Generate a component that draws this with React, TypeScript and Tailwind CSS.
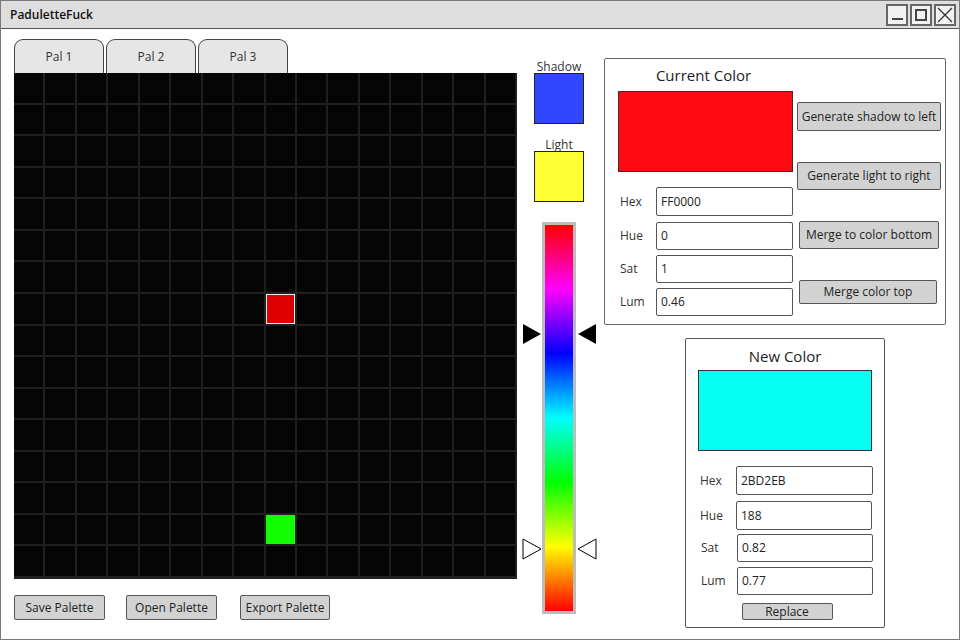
import React from 'react';

const font = { fontFamily: '"Open Sans", "DejaVu Sans", sans-serif' };

const CELLS = Array.from({ length: 256 }, (_, i) => i);
const RED_CELL = 7 * 16 + 8;
const GREEN_CELL = 14 * 16 + 8;

const Btn: React.FC<{ label: string; className?: string }> = ({ label, className }) => (
  <div
    className={
      'flex items-center justify-center bg-[#d2d2d2] border border-[#555] rounded-[2px] text-[12px] text-[#222] ' +
      (className || '')
    }
  >
    {label}
  </div>
);

const Field: React.FC<{ label: string; value: string; className?: string }> = ({ label, value, className }) => (
  <div className={'flex items-center ' + (className || '')}>
    <span className="w-[38px] pl-[2px] text-[12px] text-[#333]">{label}</span>
    <div className="flex-1 h-full flex items-center px-[4px] bg-white border-[1.5px] border-[#555] rounded-[2px] text-[12px] text-[#222]">
      {value}
    </div>
  </div>
);

const Arrow: React.FC<{ dir: 'right' | 'left'; filled: boolean }> = ({ dir, filled }) => (
  <svg width="20" height="22" viewBox="0 0 20 22">
    <polygon
      points={dir === 'right' ? '1,1 19,11 1,21' : '19,1 1,11 19,21'}
      fill={filled ? '#000' : '#fff'}
      stroke="#000"
      strokeWidth={filled ? 0 : 1}
    />
  </svg>
);

export default function App() {
  return (
    <div className="w-[960px] h-[640px] bg-white border border-[#7a7a7a] flex flex-col overflow-hidden" style={font}>
      {/* title bar */}
      <div className="h-[28px] shrink-0 bg-[#dedede] border-b border-[#555] flex items-center justify-between pl-[9px] pr-[3px]">
        <span className="text-[12px] font-semibold text-[#111]">PaduletteFuck</span>
        <div className="flex gap-[2px]">
          <div className="w-[22px] h-[22px] border-2 border-[#666] bg-[#f2f2f2] flex items-end justify-center pb-[4px]">
            <div className="w-[11px] h-[2px] bg-[#444]" />
          </div>
          <div className="w-[22px] h-[22px] border-2 border-[#666] bg-[#f2f2f2] flex items-center justify-center">
            <div className="w-[12px] h-[12px] border-2 border-[#444]" />
          </div>
          <div className="w-[22px] h-[22px] border-2 border-[#666] bg-[#f2f2f2] flex items-center justify-center">
            <svg width="16" height="16" viewBox="0 0 16 16">
              <path d="M1 1 L15 15 M15 1 L1 15" stroke="#333" strokeWidth="1.3" />
            </svg>
          </div>
        </div>
      </div>

      <div className="flex flex-1 pl-[13px]">
        {/* left: palette */}
        <div className="w-[503px] flex flex-col pt-[10px]">
          <div className="h-[34px] flex gap-[2px] items-end">
            {['Pal 1', 'Pal 2', 'Pal 3'].map(t => (
              <div
                key={t}
                className="w-[90px] h-[34px] bg-[#e6e6e6] border border-b-0 border-[#444] rounded-t-[9px] flex items-center justify-center text-[12px] text-[#333]"
              >
                {t}
              </div>
            ))}
          </div>
          <div className="w-[503px] h-[506px] bg-[#1f1f1f] grid grid-cols-16 grid-rows-16 gap-[2px] pr-[2px] pb-[3px]">
            {CELLS.map(i => (
              <div
                key={i}
                className={
                  i === RED_CELL
                    ? 'bg-[#dd0000] border border-[#eeeeee]'
                    : i === GREEN_CELL
                    ? 'bg-[#11ff00]'
                    : 'bg-[#050505]'
                }
              />
            ))}
          </div>
          <div className="flex mt-[16px] h-[25px]">
            <Btn label="Save Palette" className="w-[91px]" />
            <Btn label="Open Palette" className="w-[91px] ml-[21px]" />
            <Btn label="Export Palette" className="w-[90px] ml-[23px]" />
          </div>
        </div>

        {/* middle: shadow/light + hue bar */}
        <div className="w-[84px] flex flex-col items-center pt-[32px]">
          <span className="text-[12px] leading-[12px] text-[#333]">Shadow</span>
          <div className="w-[50px] h-[51px] bg-[#3047ff] border border-[#222]" />
          <span className="mt-[15px] text-[12px] leading-[12px] text-[#333]">Light</span>
          <div className="w-[50px] h-[51px] bg-[#ffff33] border border-[#222]" />
          <div className="relative mt-[20px] w-[80px] h-[392px] flex justify-center">
            <div className="w-[34px] h-full border-[3px] border-[#bdbdbd] bg-[linear-gradient(to_bottom,#ff0000_0%,#ff00ff_16.7%,#0000ff_33.3%,#00ffff_50%,#00ff00_66.7%,#ffff00_83.3%,#ff0000_100%)]" />
            <div className="absolute left-[3px] top-[101px]">
              <Arrow dir="right" filled />
            </div>
            <div className="absolute right-[2px] top-[101px]">
              <Arrow dir="left" filled />
            </div>
            <div className="absolute left-[3px] top-[316px]">
              <Arrow dir="right" filled={false} />
            </div>
            <div className="absolute right-[2px] top-[316px]">
              <Arrow dir="left" filled={false} />
            </div>
          </div>
        </div>

        {/* right: color panels */}
        <div className="flex flex-col pl-[3px] pt-[29px]">
          <div className="w-[342px] h-[267px] border border-[#666] rounded-[2px] flex pl-[13px]">
            <div className="w-[175px] flex flex-col">
              <div className="h-[32px] flex items-center justify-center text-[15px] text-[#222] pt-[1px] pr-[4px]">Current Color</div>
              <div className="h-[81px] bg-[#ff0a10] border border-[#333]" />
              <Field label="Hex" value="FF0000" className="h-[29px] mt-[15px]" />
              <Field label="Hue" value="0" className="h-[28px] mt-[6px]" />
              <Field label="Sat" value="1" className="h-[28px] mt-[5px]" />
              <Field label="Lum" value="0.46" className="h-[28px] mt-[5px]" />
            </div>
            <div className="w-[144px] ml-[4px] flex flex-col">
              <Btn label="Generate shadow to left" className="h-[29px] mt-[43px]" />
              <Btn label="Generate light to right" className="h-[28px] mt-[31px]" />
              <Btn label="Merge to color bottom" className="h-[28px] mt-[31px] mx-[2px]" />
              <Btn label="Merge color top" className="h-[24px] mt-[31px] ml-[2px] mr-[4px]" />
            </div>
          </div>

          <div className="w-[200px] h-[290px] ml-[81px] mt-[13px] border border-[#555] rounded-[2px] flex flex-col px-[12px]">
            <div className="h-[31px] flex items-center justify-center text-[15px] text-[#222] pt-[4px]">New Color</div>
            <div className="h-[81px] bg-[#05fff0] border border-[#333]" />
            <Field label="Hex" value="2BD2EB" className="h-[29px] mt-[15px] mr-[-1px]" />
            <Field label="Hue" value="188" className="h-[29px] mt-[6px]" />
            <Field label="Sat" value="0.82" className="h-[28px] mt-[4px] ml-[1px] mr-[-1px]" />
            <Field label="Lum" value="0.77" className="h-[28px] mt-[5px] ml-[1px] mr-[-1px]" />
            <div className="flex justify-center mt-[8px]">
              <Btn label="Replace" className="w-[91px] h-[17px] ml-[4px]" />
            </div>
          </div>
        </div>
      </div>
    </div>
  );
}
